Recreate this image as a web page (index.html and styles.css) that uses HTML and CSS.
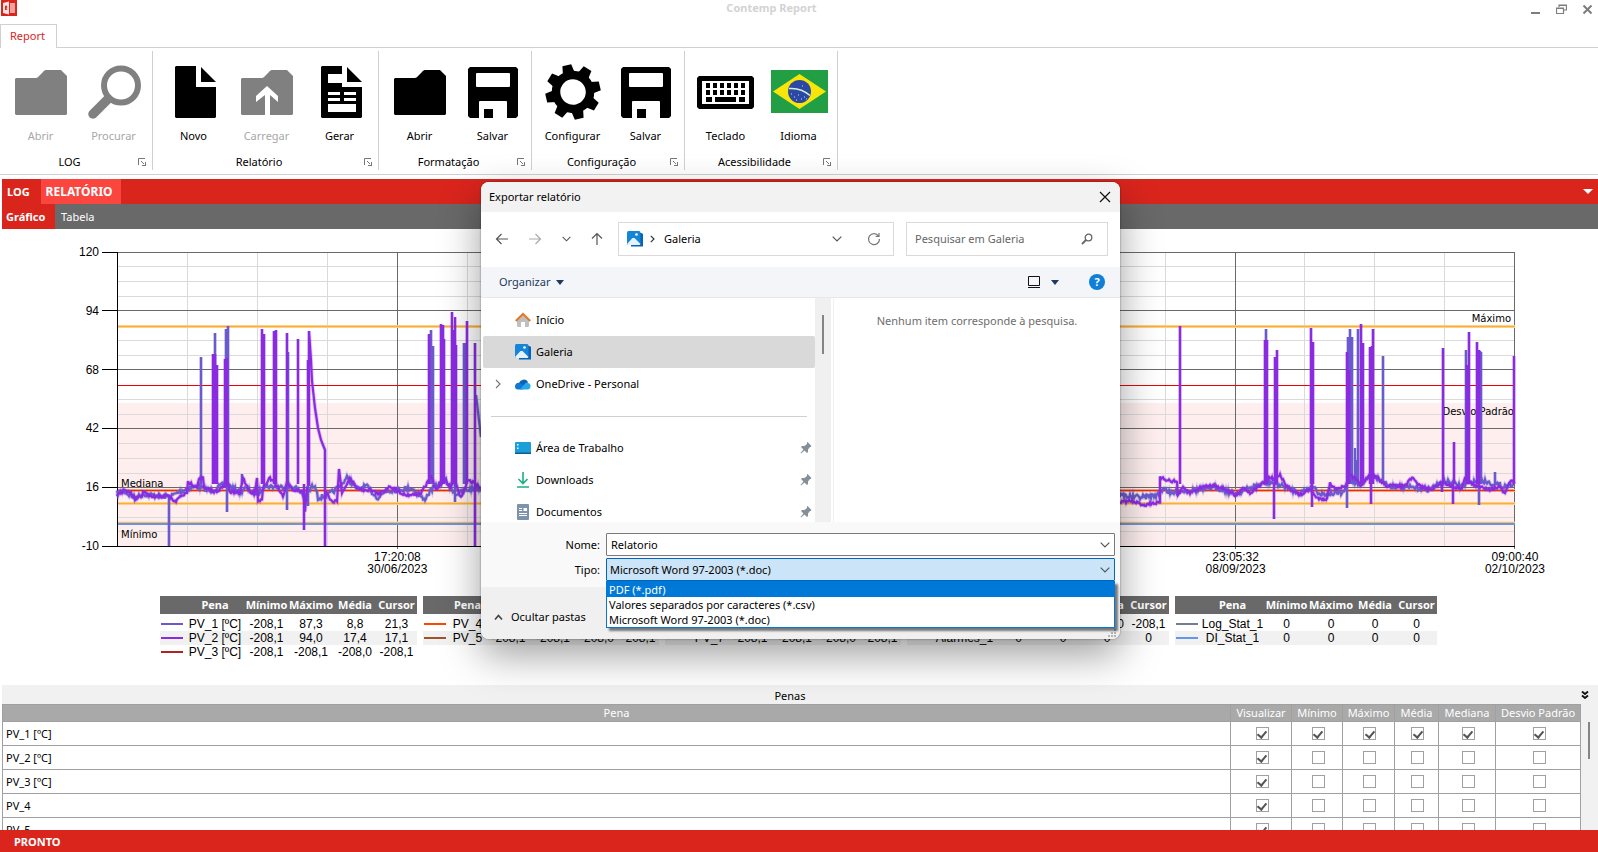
FILE: index.html
```html
<!DOCTYPE html>
<html lang="pt-BR">
<head>
<meta charset="utf-8">
<title>Contemp Report</title>
<link rel="stylesheet" href="styles.css">
</head>
<body>
<svg class="defs" aria-hidden="true">
  <symbol id="folder" viewBox="0 0 60 60"><path d="M5 16h19c3 0 3-1 5-3l3-3c1-1.500 2-2 4-2h14l6 6v38l-1 1H5l-1-1V17z"/></symbol>
  <symbol id="save" viewBox="0 0 60 60"><path fill-rule="evenodd" d="M7 5h46l2 2v47l-2 2h-9V40q0-1-1-1H17q-1 0-1 1v16H7l-2-2V7zM14 11q-1 0-1 1v12q0 1 1 1h32q1 0 1-1V12q0-1-1-1zM21 47h9v9h-9z"/></symbol>
  <symbol id="launcher" viewBox="0 0 9 9"><path d="M.5 7V.5H7" fill="none" stroke="#777"/><path d="M3 3l3 3" stroke="#777"/><path d="M8 4v4H4V7h3V4z" fill="#777"/></symbol>
  <symbol id="gallery" viewBox="0 0 16 16"><path d="M13 2h1.500l1.500 1v12.500H4V13h9z" fill="#0b62b5"/><rect width="13.500" height="14" rx="1.500" fill="#1585d8"/><path d="M0 13l5.500-6h2l6 6-1 1H1z" fill="#e4f3ff"/><circle cx="9.500" cy="3.500" r="1.300" fill="#fff"/></symbol>
  <symbol id="pin" viewBox="0 0 12 12"><path d="M7.500 0l4 4-1 1H10L8 7.500V10L7 11 4.500 8.500 1 11.500.5 11l3-3.500L1 5l1-1h2.500L7 2V.5z" fill="#848f98"/></symbol>
  <symbol id="down" viewBox="0 0 10 6"><path d="M.7.7L5 5 9.300.7" fill="none" stroke="#555" stroke-width="1.200"/></symbol>
</svg>

<header class="titlebar">
  <svg class="app-icon" width="16" height="16" viewBox="0 0 16 16"><path fill="#da251d" d="M0 0h16v16H0z"/><path fill="#f3a19c" d="M9 3h5v10H9z"/><path fill="#fbe3e1" d="M2 3l6-1.500v13L2 13z"/><path fill="none" stroke="#da251d" d="M4.500 10V6h1.200v1.700H4.500L6 10"/></svg>
  <h1>Contemp Report</h1>
  <div class="window-buttons">
    <button aria-label="Minimizar"><svg width="11" height="11" viewBox="0 0 11 11"><path d="M1 8h9v2H1z" fill="#7d7d7d"/></svg></button>
    <button aria-label="Restaurar"><svg width="11" height="11" viewBox="0 0 11 11"><path d="M3 3V1h7.500v5H8M.5 4h7v5.500h-7zM.5 4.500h7M3 1.300h7" fill="none" stroke="#7d7d7d" stroke-width="1.200"/></svg></button>
    <button aria-label="Fechar janela"><svg width="11" height="11" viewBox="0 0 11 11"><path d="M1.500 1.500l8 8m0-8l-8 8" stroke="#7d7d7d" stroke-width="2"/></svg></button>
  </div>
</header>

<nav class="ribbon-tabs"><button class="ribbon-tab">Report</button></nav>

<section class="ribbon">
  <div class="group">
    <div class="tools">
      <button class="tool off" disabled><svg><use href="#folder"/></svg>Abrir</button>
      <button class="tool off" disabled><svg viewBox="0 0 60 60"><circle cx="37" cy="23.500" r="17" fill="none" stroke="currentColor" stroke-width="6"/><path d="M9 52l15-15" stroke="currentColor" stroke-width="9.500" stroke-linecap="round"/></svg>Procurar</button>
    </div>
    <div class="caption"><span>LOG</span><button aria-label="Opções de LOG"><svg><use href="#launcher"/></svg></button></div>
  </div>
  <div class="group">
    <div class="tools">
      <button class="tool"><svg viewBox="0 0 60 60"><path d="M12 4h20v21h20v30l-1 1H12l-1-1V5zM37 5l15 15H37z"/></svg>Novo</button>
      <button class="tool off" disabled><svg viewBox="0 0 60 60"><use href="#folder"/><path d="M30 24l11 10v6l-8-7v20h-5V33l-9 7v-6z" fill="#fff"/></svg>Carregar</button>
      <button class="tool"><svg viewBox="0 0 60 60"><path fill-rule="evenodd" d="M12 4h20v8H18v9h14v4h20v30l-1 1H12l-1-1V5zM37 5l15 15H37zM18 30v3h12v-3zM34 30v3h12v-3zM18 36v3h12v-3zM34 36v3h12v-3zM18 42v8h28v-8z"/></svg>Gerar</button>
    </div>
    <div class="caption"><span>Relatório</span><button aria-label="Opções de relatório"><svg><use href="#launcher"/></svg></button></div>
  </div>
  <div class="group">
    <div class="tools">
      <button class="tool"><svg><use href="#folder"/></svg>Abrir</button>
      <button class="tool"><svg><use href="#save"/></svg>Salvar</button>
    </div>
    <div class="caption"><span>Formatação</span><button aria-label="Opções de formatação"><svg><use href="#launcher"/></svg></button></div>
  </div>
  <div class="group">
    <div class="tools">
      <button class="tool"><svg viewBox="0 0 60 60"><g transform="translate(30 30) rotate(-13)"><circle r="17" fill="none" stroke="#000" stroke-width="8.500"/><g id="cog"><path id="tooth" d="M-6-19l1.500-8.500h9L6-19z"/><use href="#tooth" transform="rotate(90)"/><use href="#tooth" transform="rotate(180)"/><use href="#tooth" transform="rotate(270)"/></g><use href="#cog" transform="rotate(45)"/></g></svg>Configurar</button>
      <button class="tool"><svg><use href="#save"/></svg>Salvar</button>
    </div>
    <div class="caption"><span>Configuração</span><button aria-label="Opções de configuração"><svg><use href="#launcher"/></svg></button></div>
  </div>
  <div class="group">
    <div class="tools">
      <button class="tool"><svg viewBox="0 0 60 60"><path fill-rule="evenodd" d="M3 14h53l2 2v29l-2 2H3l-2-2V16zM6 19v23h47V19z"/><path d="M12 21v5M19 21v5M26 21v5M33 21v5M40 21v5M47 21v5M12 28v5M19 28v5M26 28v5M33 28v5M40 28v5M47 28v5" stroke="#000" stroke-width="4"/><path d="M10 35h6v5h-6zM19 35h21v5H19zM43 35h6v5h-6z"/></svg>Teclado</button>
      <button class="tool"><svg viewBox="0 0 60 60"><path fill="#229e45" d="M2 8h57v43H2z"/><path fill="#f8e509" d="M4 29.500L30.500 12 57 29.500 30.500 47z"/><circle cx="30.500" cy="29.500" r="11.500" fill="#2b49a3"/><path d="M20 26.500q12-1 21 7" fill="none" stroke="#d8efe0" stroke-width="1.500"/><path d="M22 32h1M25 35h1M29 33h1M32 37h1M35 35h1M27 38h1M33 24h1M37 37h1" stroke="#cfd8f2"/></svg>Idioma</button>
    </div>
    <div class="caption"><span>Acessibilidade</span><button aria-label="Opções de acessibilidade"><svg><use href="#launcher"/></svg></button></div>
  </div>
</section>

<main class="workspace">
  <nav class="tabs primary"><button>LOG</button><button class="active">RELATÓRIO</button><button class="more" aria-label="Mais abas"><svg width="10" height="5" viewBox="0 0 10 5"><path d="M0 0h10L5 5z" fill="#fff"/></svg></button></nav>
  <nav class="tabs secondary"><button class="active">Gráfico</button><button>Tabela</button></nav>

  <section class="chart" aria-label="Gráfico">
    <div class="y-axis"><span>120</span><span>94</span><span>68</span><span>42</span><span>16</span><span>-10</span></div>
    <div class="plot">
      <svg id="grid" viewBox="102 249 1414 300" preserveAspectRatio="none"></svg>
      <span class="mark median">Mediana</span>
      <span class="mark min">Mínimo</span>
      <span class="mark max">Máximo</span>
      <span class="mark dev">Desvio Padrão</span>
      <svg id="traces" viewBox="102 249 1414 300" preserveAspectRatio="none"></svg>
    </div>
    <div class="x-axis"><span></span><span>17:20:08<br>30/06/2023</span><span></span><span></span><span>23:05:32<br>08/09/2023</span><span>09:00:40<br>02/10/2023</span></div>
  </section>

  <section class="legends" id="legends"></section>

  <section class="pens">
    <header><h2>Penas</h2><button aria-label="Recolher"><svg width="8" height="8" viewBox="0 0 8 8"><path d="M1 .5l3 2.500L7 .5M1 4.500L4 7l3-2.500" fill="none" stroke="#111" stroke-width="1.800"/></svg></button></header>
    <div class="pens-body">
      <table>
        <colgroup><col><col class="c1"><col class="c2"><col class="c3"><col class="c4"><col class="c5"><col class="c6"></colgroup>
        <thead><tr><th>Pena</th><th>Visualizar</th><th>Mínimo</th><th>Máximo</th><th>Média</th><th>Mediana</th><th>Desvio Padrão</th></tr></thead>
        <tbody id="pen-rows"></tbody>
      </table>
      <div class="scroll"><i></i></div>
    </div>
  </section>
</main>
<footer class="status">PRONTO</footer>

<div class="dialog" role="dialog" aria-labelledby="dlg-title">
  <header class="dlg-title"><h2 id="dlg-title">Exportar relatório</h2><button aria-label="Fechar"><svg width="12" height="12" viewBox="0 0 12 12"><path d="M1 1l10 10m0-10L1 11" stroke="#111" stroke-width="1.200"/></svg></button></header>
  <div class="dlg-nav">
    <div class="arrows">
      <button aria-label="Voltar"><svg width="14" height="14" viewBox="0 0 14 14"><path d="M13 7H1.500M6.500 2l-5 5 5 5" fill="none" stroke="#555" stroke-width="1.200"/></svg></button>
      <button aria-label="Avançar"><svg width="14" height="14" viewBox="0 0 14 14"><path d="M1 7h11.500M7.500 2l5 5-5 5" fill="none" stroke="#aaa" stroke-width="1.200"/></svg></button>
      <button aria-label="Recentes"><svg width="9" height="6"><use href="#down"/></svg></button>
      <button aria-label="Acima"><svg width="14" height="14" viewBox="0 0 14 14"><path d="M7 13V1.500M2 6.500l5-5 5 5" fill="none" stroke="#555" stroke-width="1.200"/></svg></button>
    </div>
    <div class="address"><svg width="16" height="16"><use href="#gallery"/></svg><svg width="5" height="8" viewBox="0 0 5 8"><path d="M.8.8L4 4 .8 7.200" fill="none" stroke="#333" stroke-width="1.200"/></svg><span>Galeria</span><button aria-label="Histórico"><svg width="10" height="6"><use href="#down"/></svg></button><button class="reload" aria-label="Atualizar"><svg width="14" height="14" viewBox="0 0 14 14"><path d="M11.500 4A5.500 5.500 0 1 0 12.500 7M12 1v3.300H8.700" fill="none" stroke="#777" stroke-width="1.200"/></svg></button></div>
    <div class="search"><input type="text" placeholder="Pesquisar em Galeria" aria-label="Pesquisar em Galeria"><svg width="12" height="12" viewBox="0 0 12 12"><circle cx="7.500" cy="4.500" r="3.300" fill="none" stroke="#666" stroke-width="1.300"/><path d="M5 7L1 11" stroke="#666" stroke-width="1.800"/></svg></div>
  </div>
  <div class="dlg-bar">
    <button class="organize">Organizar <i class="caret"></i></button>
    <button class="view" aria-label="Modo de exibição"><svg width="12" height="12" viewBox="0 0 12 12"><path d="M.5.500h11v9H.5zM0 11.500h12" fill="none" stroke="#111"/></svg><i class="caret"></i></button>
    <button class="help" aria-label="Ajuda">?</button>
  </div>
  <div class="dlg-content">
    <nav class="places">
      <a href="#inicio"><svg width="16" height="16" viewBox="0 0 16 16"><path d="M2 8l6-6 6 6v6l-1 1h-3v-5H6v5H3l-1-1z" fill="#bfbfbf"/><path d="M.8 9L8 1.800 15.200 9" fill="none" stroke="#e8761c" stroke-width="2"/></svg>Início</a>
      <a href="#galeria" class="current"><svg width="16" height="16"><use href="#gallery"/></svg>Galeria</a>
      <a href="#onedrive"><svg class="expand" width="6" height="10" viewBox="0 0 6 10"><path d="M1 1l4 4-4 4" fill="none" stroke="#777" stroke-width="1.200"/></svg><svg width="16" height="16" viewBox="0 0 16 16"><path d="M4 7a5 5 0 0 1 9-1l-4 6H2z" fill="#0a63b8"/><path d="M0 10.500A3.500 3.500 0 0 1 4.500 7l5 2.500L8 13.500H3a3 3 0 0 1-3-3z" fill="#0f78d4"/><path d="M5 13.500l5.500-6.500a3.300 3.300 0 0 1 2 0A3.300 3.300 0 0 1 13 13.500z" fill="#28a8ea"/></svg>OneDrive - Personal</a>
      <hr>
      <a href="#desktop"><svg width="16" height="16" viewBox="0 0 16 16"><rect y="2" width="16" height="12" rx="1" fill="#1b9fd8"/><path d="M0 12.500h16v1.500H0z" fill="#0b5f96"/><path d="M2 4h1.500v1.500H2zM2 7.500h1.500V9H2z" fill="#fff"/></svg>Área de Trabalho<svg class="pin"><use href="#pin"/></svg></a>
      <a href="#downloads"><svg width="16" height="16" viewBox="0 0 16 16"><path d="M8 0v11M3.500 7L8 11.500 12.500 7M2 15h12" fill="none" stroke="#1cae87" stroke-width="1.600"/></svg>Downloads<svg class="pin"><use href="#pin"/></svg></a>
      <a href="#documentos"><svg width="16" height="16" viewBox="0 0 16 16"><rect x="2" width="12" height="16" rx="1" fill="#7d93ab"/><path d="M4 4.500h3M4 6.500h3M4 9.500h8M4 11.500h8" fill="none" stroke="#fff"/><path d="M8.500 4H12v3H8.500z" fill="#fff"/></svg>Documentos<svg class="pin"><use href="#pin"/></svg></a>
    </nav>
    <div class="place-scroll"><i></i></div>
    <p class="empty">Nenhum item corresponde à pesquisa.</p>
  </div>
  <form class="dlg-form">
    <label for="nome">Nome:</label>
    <div class="combo"><input id="nome" type="text" value="Relatorio"><svg width="10" height="6"><use href="#down"/></svg></div>
    <label for="tipo">Tipo:</label>
    <div class="combo open">
      <select id="tipo"><option>Microsoft Word 97-2003 (*.doc)</option><option>PDF (*.pdf)</option><option>Valores separados por caracteres (*.csv)</option></select>
      <svg width="10" height="6"><use href="#down"/></svg>
      <ul class="options" role="listbox" aria-label="Tipo"><li class="hot" role="option">PDF (*.pdf)</li><li role="option">Valores separados por caracteres (*.csv)</li><li role="option">Microsoft Word 97-2003 (*.doc)</li></ul>
    </div>
  </form>
  <footer class="dlg-foot">
    <button><svg width="9" height="7" viewBox="0 0 9 7"><path d="M1 5.500l3.500-4 3.500 4" fill="none" stroke="#444" stroke-width="1.700"/></svg>Ocultar pastas</button>
    <svg class="grip" width="8" height="8" viewBox="0 0 8 8"><path d="M6 0h2v2H6zM3 3h2v2H3zM6 3h2v2H6zM0 6h2v2H0zM3 6h2v2H3zM6 6h2v2H6z" fill="#b5b5b5"/></svg>
  </footer>
</div>
<script src="app.js"></script>
</body>
</html>
```

FILE: styles.css
```css
* { box-sizing: border-box; }
body { margin: 0; height: 100vh; display: flex; flex-direction: column; overflow: hidden; background: #fff; color: #000; font: 11px/16px "Noto Sans", "Open Sans", sans-serif; }
h1, h2, p { margin: 0; font: inherit; }
button, input, select { font: inherit; color: inherit; margin: 0; }
button { display: flex; align-items: center; justify-content: center; padding: 0; border: 0; background: none; }
svg { flex: none; display: block; }
.defs { position: absolute; width: 0; height: 0; }

.titlebar { display: flex; flex: none; height: 24px; }
.app-icon { margin-left: 1px; }
.titlebar h1 { flex: 1; padding-right: 4px; text-align: center; font-weight: bold; color: #d3d3d3; }
.window-buttons { display: flex; gap: 15px; padding: 4px 5px 0 0; align-items: flex-start; }

.ribbon-tabs { display: flex; flex: none; height: 24px; border-bottom: 1px solid #d0d0d0; }
.ribbon-tab { width: 57px; height: 24px; padding-right: 2px; padding-bottom: 2px; border: 1px solid #d0d0d0; border-bottom: 0; background: #fff; color: #da251d; }
.ribbon { display: flex; flex: none; height: 127px; padding-top: 3px; border-bottom: 1px solid #d0d0d0; }
.group { height: 119px; padding: 11px 2px 0 4px; border-right: 1px solid #d0d0d0; }
.tools { display: flex; }
.tool { flex-direction: column; width: 73px; }
.tool svg { width: 60px; height: 60px; margin-bottom: 6px; fill: currentColor; }
.off { color: #a8a8a8; }
.off svg { color: #808080; }
.caption { display: flex; align-items: center; margin-top: 10px; }
.caption span { flex: 1; padding-right: 3px; text-align: center; }
.caption button { margin-right: 3px; }
.caption svg { width: 9px; height: 9px; }

.workspace { flex: 1; min-height: 0; display: flex; flex-direction: column; padding: 4px 0 0 2px; }
.tabs { display: flex; flex: none; height: 25px; color: #fff; }
.tabs button { padding: 0 6px; }
.primary { background: #da251d; font-weight: bold; }
.primary button { padding: 0 11px 0 5px; }
.primary .active { padding: 0 8px 0 5px; background: #fb4640; font-size: 12px; }
.primary .more { margin-left: auto; padding-right: 5px; }
.secondary { background: #696969; }
.secondary .active { width: 53px; padding-left: 4px; justify-content: flex-start; background: #da251d; font-weight: bold; }

.chart { flex: 1; display: grid; grid-template-columns: 100px 1fr 82px; grid-template-rows: 1fr 22px; padding-top: 20px; font: 12px/12px "Liberation Sans", sans-serif; }
.y-axis { display: flex; flex-direction: column; justify-content: space-between; padding-right: 3px; margin: -3px 0; text-align: right; }
.plot { position: relative; min-height: 0; }
.plot svg { position: absolute; left: 0; top: 0; width: 100%; height: 100%; }
.mark { position: absolute; font: 10px/14px "DejaVu Sans", sans-serif; }
.median { left: 19px; top: 76%; }
.min { left: 19px; top: 93%; }
.max { right: 5px; top: 21%; }
.dev { right: 2px; top: 52%; }
.x-axis { grid-column: 2; display: flex; justify-content: space-between; padding-top: 2px; text-align: center; margin: 0 -30px 0 -15px; }
.x-axis span { width: 62px; white-space: nowrap; }

.legends { display: flex; flex: none; justify-content: center; gap: 6px; height: 114px; padding: 25px 3px 0 0; font: 12px/14px "Liberation Sans", sans-serif; }
.legends table { height: 0; border-spacing: 0; table-layout: fixed; }
.legends th { height: 18px; padding: 0; background: #696969; color: #fff; font: bold 11px/18px "Noto Sans", sans-serif; text-align: center; white-space: nowrap; }
.legends td { height: 14px; padding: 0; text-align: center; white-space: nowrap; }
.legends tbody::before { content: ""; display: block; height: 3px; }
.legends tbody tr:nth-child(even) td { background: #f1f1f1; }
.legends hr { width: 22px; height: 2px; margin: 0 1px; border: 0; }
.legends .sw { width: 25px; }
.legends .min-col { width: 43px; }
.legends .max-col { width: 46px; }
.legends .avg-col { width: 42px; }
.legends .cur-col { width: 41px; }
.legends .n-wide { width: 60px; }
.legends .n-mid { width: 39px; }
.legends .n-long { width: 65px; }

.pens { flex: none; height: 145px; }
.pens header { display: flex; align-items: center; height: 19px; background: #f1f1f1; }
.pens h2 { flex: 1; text-align: center; padding-top: 2px; }
.pens header button { width: 20px; padding-right: 7px; }
.pens-body { display: flex; height: 126px; overflow: hidden; }
.pens table { flex: 1; min-width: 0; border-collapse: collapse; table-layout: fixed; align-self: flex-start; }
.pens th { height: 17px; padding: 0; border: 1px solid #a0a0a0; background: #a9a9a9; color: #fff; font-weight: normal; line-height: 16px; white-space: nowrap; }
.pens td { height: 24px; padding: 0 3px; border: 1px solid #a0a0a0; }
.pens td + td { padding: 0 0 0 2px; }
.pens input { appearance: none; display: block; width: 13px; height: 13px; margin: 0 auto; border: 1px solid #a0a0a0; background: #fff; }
.pens input:checked::after { content: ""; display: block; width: 4px; height: 7px; margin: 1px auto 0; border: solid #555; border-width: 0 2px 2px 0; transform: rotate(40deg); }
.c1 { width: 61px; }
.c2 { width: 51px; }
.c3 { width: 52px; }
.c4 { width: 44px; }
.c5 { width: 57px; }
.c6 { width: 85px; }
.scroll { width: 17px; padding: 18px 7px; background: #f1f1f1; }
.scroll i { display: block; width: 2px; height: 37px; background: #858585; }
.status { flex: none; height: 22px; padding: 4px 14px; background: #da251d; color: #fff; font-weight: bold; }

.dialog { position: absolute; left: 481px; top: 182px; width: 639px; border-radius: 8px; background: #fff; box-shadow: 0 0 2px rgba(0,0,0,.5), 0 16px 40px rgba(0,0,0,.38); }
.dlg-title { display: flex; align-items: center; justify-content: space-between; height: 30px; padding: 0 9px 0 8px; border-radius: 8px 8px 0 0; background: #f2f2f2; }
.dlg-nav { display: flex; height: 55px; padding: 10px 12px 11px 14px; }
.arrows { display: flex; flex: none; align-items: center; justify-content: space-between; width: 123px; padding-right: 14px; }
.address { display: flex; flex: none; align-items: center; width: 276px; padding: 0 12px 0 8px; border: 1px solid #d9d9d9; }
.address > svg + svg { margin: 0 9px 0 7px; }
.address button { margin-left: auto; }
.address .reload { margin-left: 25px; }
.search { display: flex; align-items: center; flex: 1; margin-left: 12px; padding: 0 14px 0 8px; border: 1px solid #d9d9d9; }
.search input { flex: 1; min-width: 0; padding: 0; border: 0; outline: 0; }
.search input::placeholder { color: #666; opacity: 1; }
.dlg-bar { display: flex; align-items: center; height: 31px; padding: 0 15px 0 18px; border-bottom: 1px solid #e5e8eb; background: #f3f5f8; color: #1b3a63; }
.caret { width: 0; height: 0; border: 4px solid transparent; border-top: 5px solid #1b3a63; border-bottom: 0; }
.organize { gap: 6px; }
.view { gap: 11px; margin: 0 30px 0 auto; }
.help { width: 16px; height: 16px; border-radius: 50%; background: #0f7fd7; color: #fff; font-weight: bold; }
.dlg-content { display: flex; height: 224px; overflow: hidden; }
.places { flex: none; width: 334px; padding: 6px 0 0 2px; }
.places a { position: relative; display: flex; align-items: center; gap: 5px; height: 32px; padding: 0 3px 0 32px; border-radius: 2px; color: #000; text-decoration: none; }
.places .current { background: #d9d9d9; }
.places .expand { position: absolute; left: 12px; }
.places hr { height: 1px; margin: 16px 8px 15px; border: 0; background: #d0d0d0; }
.pin { width: 12px; height: 12px; margin-left: auto; }
.place-scroll { width: 16px; padding: 17px 7px; background: #f0f0f0; }
.place-scroll i { display: block; width: 2px; height: 39px; background: #858585; }
.empty { flex: 1; margin-left: 2px; padding-top: 15px; border-left: 1px solid #f0f0f0; text-align: center; color: #6d6d6d; }
.dlg-form { display: grid; grid-template-columns: 119px 1fr; column-gap: 6px; row-gap: 2px; height: 65px; padding: 11px 5px 0 0; background: #f9f9f9; align-content: start; align-items: center; text-align: right; }
.combo { position: relative; display: flex; align-items: center; height: 23px; padding-right: 4px; border: 1px solid #7a7a7a; border-radius: 1px; background: #fff; }
.combo input, .combo select { flex: 1; min-width: 0; height: 20px; padding: 0 4px; border: 0; outline: 0; background: none; }
.combo select { appearance: none; padding: 0 3px; }
.combo.open { border-color: #0067c0; background: #cce4f7; }
.options { position: absolute; z-index: 1; left: -1px; right: -1px; top: 22px; margin: 0; padding: 0; border: 1px solid #0078d7; background: #fff; list-style: none; line-height: 15px; text-align: left; box-shadow: 3px 3px 2px rgba(0,0,0,.5); }
.options li { padding: 0 2px; }
.options .hot { background: #0078d7; color: #fff; }
.dlg-foot { display: flex; align-items: center; justify-content: space-between; height: 52px; padding: 8px 4px 0 13px; border-radius: 0 0 8px 8px; background: #f0f0f0; }
.dlg-foot button { gap: 8px; }
.grip { align-self: flex-end; margin-bottom: 2px; }
```

FILE: app.js
```js
const PV1 = '#6a5acd', PV2 = '#8a2be2';

let seed = 7;
const rnd = () => (seed = (seed * 16807) % 2147483647) / 2147483647 - 0.5;

// Interpolates between key points and adds a small ripple.
function baseline(points, ripple) {
  let d = '';
  for (let i = 0; i < points.length - 1; i++) {
    const [x0, y0] = points[i], [x1, y1] = points[i + 1];
    const n = Math.max(1, Math.round(x1 - x0));
    for (let k = 0; k < n; k++) {
      const t = k / n;
      d += `${d ? 'L' : 'M'}${(x0 + (x1 - x0) * t).toFixed(1)} ${(y0 + (y1 - y0) * t + rnd() * ripple).toFixed(1)}`;
    }
  }
  return d;
}
const spikes = (list) => list.map(([x, y, from = 484]) => `M${x} ${from}V${y}`).join('');

const base1 = [[117,493],[123,491],[135,498],[143,494],[169,497],[188,488],[197,486],[210,491],[225,484],[241,492],[244,488],[258,494],[264,486],[280,487],[295,487],[306,497],[312,486],[317,490],[318,498],[330,494],[340,486],[347,478],[358,489],[366,486],[378,498],[386,491],[412,488],[424,500],[431,490],[445,480],[456,494],[470,489],[481,488],[1120,495],[1133,497],[1145,497],[1158,495],[1164,487],[1170,494],[1180,491],[1200,490],[1215,487],[1235,494],[1255,486],[1270,482],[1286,487],[1300,493],[1313,486],[1320,494],[1343,493],[1349,480],[1360,484],[1372,475],[1390,486],[1430,489],[1445,481],[1460,486],[1480,480],[1495,484],[1502,486],[1515,483]];
const base2a = [[117,495],[123,491],[130,492],[135,499],[142,496],[143,491],[150,497],[169,496],[175,502],[182,495],[187,494],[188,482],[197,487],[199,478],[203,478],[204,488],[215,492],[228,484],[230,492],[240,493],[243,478],[250,492],[254,494],[257,479],[258,500],[262,500],[263,487],[270,478],[276,485],[283,497],[287,481],[292,490],[303,491],[305,512],[307,488],[309,486]];
const base2b = [[325,490],[332,502],[337,500],[339,470],[342,492],[350,479],[358,489],[370,490],[380,494],[390,486],[405,495],[420,494],[428,482],[431,476],[436,490],[445,478],[450,488],[455,480],[461,498],[468,479],[475,484],[481,489]];
const base2c = [[1120,502],[1130,501],[1145,505],[1152,503],[1160,503],[1160,478],[1168,480],[1177,482],[1178,495],[1183,488],[1190,493],[1202,487],[1215,485],[1227,490],[1236,496],[1243,487],[1250,493],[1262,484],[1270,477],[1275,480],[1280,475],[1286,486],[1300,495],[1311,489],[1316,498],[1327,499],[1330,483],[1334,488],[1346,487],[1350,475],[1362,485],[1372,473],[1380,480],[1387,486],[1405,486],[1412,478],[1420,486],[1430,490],[1443,482],[1453,487],[1462,488],[1465,478],[1475,486],[1490,489],[1500,487],[1505,494],[1510,482],[1514,481]];

const spikes1 = [[201,357],[215,333],[226,329],[228,326],[227,512],[169,546,496],[242,474],[288,352],[287,510],[308,506],[431,330],[433,346],[454,334],[464,343],[466,343],[455,502],[1266,329],[1348,337],[1350,329],[1352,337],[1355,448],[1358,329],[1356,460],[1383,356],[1466,350],[1480,351],[1481,352],[1347,508],[1479,505],[1495,472]];
const spikes2 = [[213,354],[215,354],[217,365],[225,359],[227,358],[262,329],[264,334],[274,331],[276,330],[287,333],[298,339],[308,360],[304,530],[325,546],[429,334],[441,324],[443,325],[444,339],[452,312],[453,330],[455,317],[456,345],[467,321],[475,343],[475,546],[1180,326],[1265,340],[1267,340],[1275,357],[1277,350],[1274,519],[1311,328],[1313,342],[1312,507],[1347,352],[1349,370],[1361,324],[1363,343],[1370,347],[1372,346],[1373,329],[1371,504],[1443,348],[1442,492],[1454,442],[1453,504],[1467,365],[1469,332],[1477,342],[1479,350],[1514,356]];

const line = (x1, y1, x2, y2, c, w = 1) => `<path d="M${x1} ${y1}L${x2} ${y2}" stroke="${c}" stroke-width="${w}"/>`;
const trace = (d, c) => `<g fill="none" stroke="${c}"><path d="${d}" stroke-width="4" opacity=".25"/><path d="${d}" stroke-width="2.200"/></g>`;

let grid = '<rect x="117" y="403" width="1398" height="143" fill="#feeeee"/>';
for (const y of [266.5,281.5,296.5,340.5,355.5,399.5,414.5,443.5,458.5,473.5,517.5,531.5]) grid += line(117, y, 1514, y, '#dadada');
for (const x of [187.5,257.5,327.5,467.5,1165.5,1304.5,1374.5,1444.5]) grid += line(x, 252, x, 546, '#dadada');
for (const y of [252.5,310.5,369.5,428.5,487.5]) grid += line(117, y, 1515, y, '#696969') + line(102, y, 117, y, '#000');
for (const x of [397.5,1235.5,1514.5]) grid += line(x, 252, x, 549, '#696969');
for (const y of [326.5,503.5,523]) grid += line(117, y, 1515, y, '#fdd9a0', 3) + line(117, y, 1515, y, '#f9b038', 1.5);
grid += line(117, 524, 1515, 524, '#6495ed', 2) + line(117, 385.5, 1515, 385.5, '#f00000');
grid += line(117, 490.5, 1515, 490.5, '#f5a080', 3) + line(117, 490.5, 1515, 490.5, '#ee2c0c');
grid += line(102, 546.5, 1515, 546.5, '#000') + line(117.5, 252, 117.5, 547, '#000');
document.getElementById('grid').innerHTML = grid;

document.getElementById('traces').innerHTML =
  trace(baseline(base1, 5) + spikes(spikes1) + 'M476 395L481 437', PV1) +
  trace(baseline(base2a, 3) + 'M309 486V331L311 360 312 381 315 408 318 428 321 440 325 450V490' + baseline(base2b, 3) + baseline(base2c, 3) + spikes(spikes2), PV2);

const legends = [
  ['n-wide', [['PV_1 [ºC]', '-208,1', '87,3', '8,8', '21,3', PV1], ['PV_2 [ºC]', '-208,1', '94,0', '17,4', '17,1', PV2], ['PV_3 [ºC]', '-208,1', '-208,1', '-208,0', '-208,1', '#b22222']]],
  ['n-mid', [['PV_4', '-208,1', '-208,1', '-208,0', '-208,1', '#ff4500'], ['PV_5', '-208,1', '-208,1', '-208,0', '-208,1', '#a0522d']]],
  ['n-mid', [['PV_6', '-208,1', '-208,1', '-208,0', '-208,1', '#daa520'], ['PV_7', '-208,1', '-208,1', '-208,0', '-208,1', '#808000']]],
  ['n-long', [['PV_8', '-208,1', '-208,1', '-208,0', '-208,1', '#2e8b57'], ['Alarmes_1', '0', '0', '0', '0', '#5f9e8f']]],
  ['n-long', [['Log_Stat_1', '0', '0', '0', '0', '#708090'], ['DI_Stat_1', '0', '0', '0', '0', '#6495ed']]]
];
document.getElementById('legends').innerHTML = legends.map(([cls, rows]) => `<table><thead><tr><th class="sw"></th><th class="${cls}">Pena</th><th class="min-col">Mínimo</th><th class="max-col">Máximo</th><th class="avg-col">Média</th><th class="cur-col">Cursor</th></tr></thead><tbody>${rows.map(r => `<tr><td><hr style="background:${r[5]}"></td>${r.slice(0, 5).map(v => `<td>${v}</td>`).join('')}</tr>`).join('')}</tbody></table>`).join('');

const columns = ['Visualizar', 'Mínimo', 'Máximo', 'Média', 'Mediana', 'Desvio Padrão'];
document.getElementById('pen-rows').innerHTML = ['PV_1 [ºC]', 'PV_2 [ºC]', 'PV_3 [ºC]', 'PV_4', 'PV_5'].map((name, i) =>
  `<tr><td>${name}</td>${columns.map((c, k) => `<td><input type="checkbox" aria-label="${name} ${c}"${i === 0 || k === 0 ? ' checked' : ''}></td>`).join('')}</tr>`).join('');
```
